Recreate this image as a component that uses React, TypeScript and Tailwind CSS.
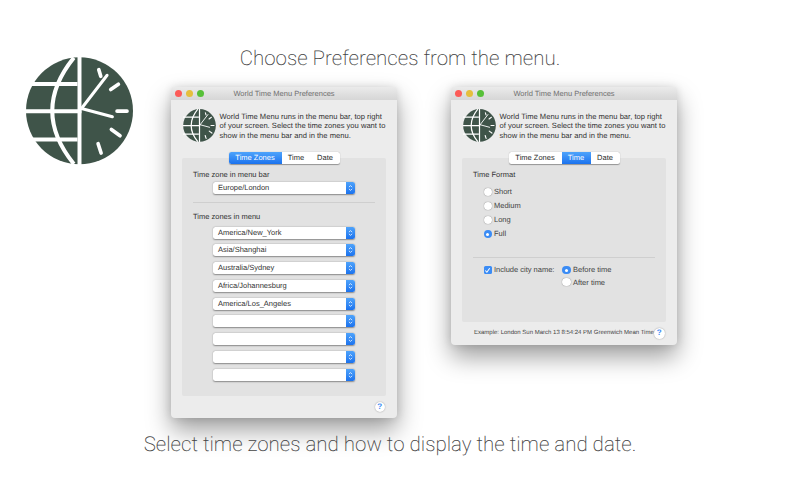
const ui = { fontFamily: '"Liberation Sans", Arial, sans-serif' };

function Logo({ className }: { className: string }) {
  return (
    <svg viewBox="78 80 322 325" className={className}>
      <circle cx="239" cy="242" r="161" fill="#3f5449" />
      <g stroke="#fff" fill="none">
        <path d="M239 70V415" strokeWidth="12" />
        <path d="M70 161H233M70 243H245M70 328H233" strokeWidth="12" />
        <path d="M222 82Q92 242 222 402" strokeWidth="12" />
      </g>
      <g stroke="#fff" fill="none" strokeLinecap="round">
        <path d="M245 235L322 135" strokeWidth="9" />
        <path d="M245 235L338 260" strokeWidth="9" />
        <path d="M297 118L303 138M333 178L356 162M352 243H382M335 298L361 317M295 341L304 369" strokeWidth="11" />
      </g>
    </svg>
  );
}

function Win({ children }: { children: React.ReactNode }) {
  return (
    <div className="w-[226px] rounded-[4px] bg-[#ececec] shadow-[0_12px_24px_rgba(0,0,0,0.38),0_0_8px_rgba(0,0,0,0.12)] overflow-hidden flex flex-col">
      <div className="h-[13px] flex items-center bg-gradient-to-b from-[#ebebeb] to-[#d6d6d6] relative px-[4px] gap-[4.5px] shrink-0">
        <span className="w-[6.5px] h-[6.5px] rounded-full bg-[#fc5b57]" />
        <span className="w-[6.5px] h-[6.5px] rounded-full bg-[#e5bf3c]" />
        <span className="w-[6.5px] h-[6.5px] rounded-full bg-[#57c038]" />
        <span className="absolute inset-0 text-center text-[7.5px] leading-[14px] text-[#6f6f6f]">
          World Time Menu Preferences
        </span>
      </div>
      <div className="flex pl-[12px] pt-[9px] gap-[3.5px] h-[52px] shrink-0">
        <Logo className="w-[33px] h-[33px] shrink-0" />
        <p className="text-[7.6px] leading-[9.6px] text-[#333] pt-[2.5px] whitespace-nowrap">
          World Time Menu runs in the menu bar, top right
          <br />
          of your screen. Select the time zones you want to
          <br />
          show in the menu bar and in the menu.
        </p>
      </div>
      {children}
    </div>
  );
}

function Tabs({ active }: { active: string }) {
  const tabs = [
    { name: "Time Zones", width: "w-[53px]" },
    { name: "Time", width: "w-[29px]" },
    { name: "Date", width: "w-[29px]" },
  ];
  return (
    <div className="relative z-10 mx-auto flex h-[12px] w-[111px] overflow-hidden rounded-[2.5px] bg-white shadow-[0_0.5px_1px_rgba(0,0,0,0.35)]">
      {tabs.map((t) => (
        <div
          key={t.name}
          className={
            t.width +
            " text-center text-[7.5px] leading-[12px] " +
            (t.name === active
              ? "bg-gradient-to-b from-[#4ea3fb] to-[#1b72ee] text-white"
              : "text-[#2a2a2a]")
          }
        >
          {t.name}
        </div>
      ))}
    </div>
  );
}

function Select({ value }: { value?: string }) {
  return (
    <div className="ml-[31px] flex h-[12px] w-[142px] overflow-hidden rounded-[2.5px] bg-white shadow-[0_0.5px_1.5px_rgba(0,0,0,0.4)]">
      <div className="flex-1 pl-[5px] text-[7.5px] leading-[12px] text-[#333]">{value}</div>
      <div className="flex w-[9px] items-center justify-center bg-gradient-to-b from-[#4ea3fb] to-[#1b72ee]">
        <svg viewBox="0 0 6 10" className="h-[8px] w-[5px]" fill="none" stroke="#fff" strokeWidth="1">
          <path d="M1 4L3 2L5 4M1 6L3 8L5 6" />
        </svg>
      </div>
    </div>
  );
}

function Radio({ on, label }: { on?: boolean; label: string }) {
  return (
    <div className="flex h-[10px] items-center gap-[2px] text-[7.5px] text-[#444]">
      {on ? (
        <span className="flex h-[8.5px] w-[8.5px] items-center justify-center rounded-full bg-[#3b8cf5]">
          <span className="h-[3px] w-[3px] rounded-full bg-white" />
        </span>
      ) : (
        <span className="h-[8.5px] w-[8.5px] rounded-full bg-white shadow-[0_0_1px_rgba(0,0,0,0.6)]" />
      )}
      {label}
    </div>
  );
}

function Help() {
  return (
    <span className="flex h-[10.5px] w-[10.5px] items-center justify-center rounded-full bg-white text-[8px] font-bold text-[#3b8cf5] shadow-[0_0_1.5px_rgba(0,0,0,0.4)]">
      ?
    </span>
  );
}

export default function App() {
  const zones = ["America/New_York", "Asia/Shanghai", "Australia/Sydney", "Africa/Johannesburg", "America/Los_Angeles", "", "", "", ""];

  return (
    <div className="flex h-[500px] w-[800px] flex-col overflow-hidden bg-white [text-rendering:geometricPrecision]" style={ui}>
      <h1
        className="h-[87px] pt-[47px] text-center text-[20.5px] font-extralight leading-[24px] text-[#444] shrink-0"
        style={{ fontFamily: "Roboto, sans-serif" }}
      >
        Choose Preferences from the menu.
      </h1>

      <div className="flex items-start shrink-0">
        <Logo className="-mt-[30px] ml-[26px] h-[108px] w-[107px] shrink-0" />

        {/* time zones window */}
        <div className="ml-[38px]">
          <Win>
            <div className="ml-[11px] w-[204px]">
              <Tabs active="Time Zones" />
              <div className="-mt-[6px] h-[238px] rounded-[2px] bg-[#e2e2e2] pt-[12px]">
                <div className="pl-[11px] text-[7.5px] leading-[10px] text-[#333]">Time zone in menu bar</div>
                <div className="mt-[2px]">
                  <Select value="Europe/London" />
                </div>
                <div className="mx-[11px] mt-[8px] h-px bg-[#cfcfcf]" />
                <div className="mt-[9px] pl-[11px] text-[7.5px] leading-[10px] text-[#333]">Time zones in menu</div>
                <div className="mt-[4.5px] flex flex-col gap-[5.75px]">
                  {zones.map((z, i) => (
                    <Select key={i} value={z} />
                  ))}
                </div>
              </div>
            </div>
            <div className="flex h-[21.5px] items-center justify-end pr-[12px]">
              <Help />
            </div>
          </Win>
        </div>

        {/* time format window */}
        <div className="ml-[54px]">
          <Win>
            <div className="ml-[11px] w-[204px]">
              <Tabs active="Time" />
              <div className="-mt-[6px] h-[164px] rounded-[2px] bg-[#e2e2e2] pt-[12px]">
                <div className="pl-[11px] text-[7.5px] leading-[10px] text-[#333]">Time Format</div>
                <div className="mt-[7px] flex flex-col gap-[4px] pl-[21.5px]">
                  <Radio label="Short" />
                  <Radio label="Medium" />
                  <Radio label="Long" />
                  <Radio on label="Full" />
                </div>
                <div className="mx-[11px] mt-[18px] h-px bg-[#cfcfcf]" />
                <div className="mt-[7px] flex items-start pl-[21.5px]">
                  <div className="flex h-[10px] items-center gap-[2px] text-[7.5px] text-[#444]">
                    <span className="flex h-[8.5px] w-[8.5px] items-center justify-center rounded-[1.5px] bg-[#3b8cf5]">
                      <svg viewBox="0 0 8 8" className="h-[7px] w-[7px]" fill="none" stroke="#fff" strokeWidth="1.2">
                        <path d="M1.5 4L3.3 6L6.5 1.5" />
                      </svg>
                    </span>
                    Include city name:
                  </div>
                  <div className="ml-[8px] flex flex-col gap-[2.2px]">
                    <Radio on label="Before time" />
                    <Radio label="After time" />
                  </div>
                </div>
              </div>
            </div>
            <div className="flex h-[22.5px] items-center pl-[23px]">
              <span className="w-[180px] whitespace-nowrap text-[6px] text-[#444]">
                Example: London Sun March 13 8:54:24 PM Greenwich Mean Time
              </span>
              <Help />
            </div>
          </Win>
        </div>
      </div>

      <h2
        className="relative mt-[15px] pr-[20px] text-center text-[20.5px] font-extralight leading-[24px] text-[#444]"
        style={{ fontFamily: "Roboto, sans-serif" }}
      >
        Select time zones and how to display the time and date.
      </h2>
    </div>
  );
}
